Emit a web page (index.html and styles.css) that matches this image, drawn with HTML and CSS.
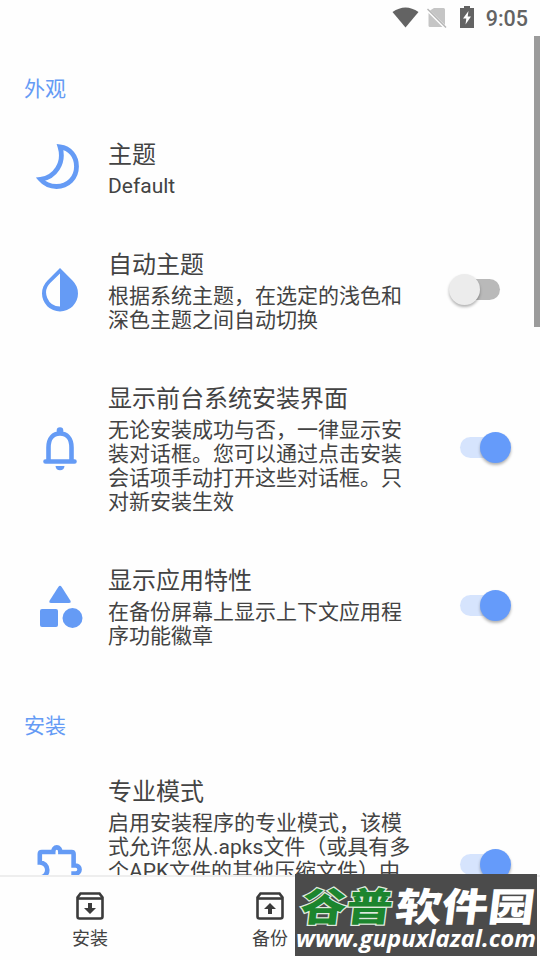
FILE: index.html
```html
<!DOCTYPE html>
<html lang="zh-CN">
<head>
<meta charset="utf-8">
<title>设置</title>
<link rel="stylesheet" href="styles.css">
</head>
<body>
<div class="screen">
  <header class="status">
    <svg width="27" height="22" viewBox="0 0 27 22"><path d="M.5 5Q13.500-4 26.500 5L13.500 20.500z" fill="#636363"/></svg>
    <svg class="sim" width="20" height="22" viewBox="0 0 20 22"><path d="M7 1h9.500q1.500 0 1.500 1.500V18L3 3.500zM1.500 6L15.500 20H3q-1.500 0-1.500-1.500z" fill="#c5c5c5"/><path d="M.5 2L19 20.500" stroke="#b5b5b5" stroke-width="1.500"/></svg>
    <svg class="battery" width="14" height="22" viewBox="0 0 14 22"><path d="M4 0h6v2h4v20H0V2h4z" fill="#636363"/><path d="M8.500 5L3 12.500h3.300L5.500 18.500 11 10.500H7.700z" fill="#fff"/></svg>
    <span class="clock">9:05</span>
  </header>
  <main class="settings">
    <h2>外观</h2>
    <section class="row">
      <svg class="icon" viewBox="0 0 48 48"><path d="M24 3.800C34 5 40.500 13 40.500 23.500 40.500 35 32 43.500 20.500 43.500 14 43.500 8.500 41 4.500 36.300 19 34.500 29 20 24 3.800z" fill="none" stroke="#659bf5" stroke-width="4.800"/></svg>
      <div class="copy"><h3>主题</h3><p class="latin">Default</p></div>
    </section>
    <section class="row">
      <svg class="icon" viewBox="0 0 48 48"><path d="M24 3L11.300 15.700a18 18 0 1 0 25.400 0zM24 41.500A13.800 13.800 0 0 1 14.200 18L24 8.500z" fill="#659bf5"/></svg>
      <div class="copy"><h3>自动主题</h3><p>根据系统主题，在选定的浅色和<br>深色主题之间自动切换</p></div>
      <i class="switch off"></i>
    </section>
    <section class="row">
      <svg class="icon low" viewBox="0 0 48 48"><path d="M12.500 36V22.500C12.500 13 17.500 8.500 24 8.500s11.500 4.500 11.500 14V36M9.500 36.500h29" fill="none" stroke="#659bf5" stroke-width="4.600" stroke-linecap="round"/><circle cx="24" cy="5.500" r="3.300" fill="#659bf5"/><path d="M19.500 41h9q-.5 4.300-4.500 4.300T19.500 41z" fill="#659bf5"/></svg>
      <div class="copy"><h3>显示前台系统安装界面</h3><p>无论安装成功与否，一律显示安<br>装对话框。您可以通过点击安装<br>会话项手动打开这些对话框。只<br>对新安装生效</p></div>
      <i class="switch"></i>
    </section>
    <section class="row">
      <svg class="icon low" viewBox="0 0 48 48"><g fill="#659bf5"><path d="M22.300 4q1.700-2.500 3.400 0l8.600 13.500q1.200 2.500-1.300 2.500H15q-2.500 0-1.300-2.500z"/><rect x="4" y="26" width="18" height="18" rx="2"/><circle cx="36.500" cy="35" r="10"/></g></svg>
      <div class="copy"><h3>显示应用特性</h3><p>在备份屏幕上显示上下文应用程<br>序功能徽章</p></div>
      <i class="switch"></i>
    </section>
    <h2>安装</h2>
    <section class="row tall">
      <svg class="icon low" viewBox="0 0 48 48"><path d="M3.800 20.500V12q0-2 2-2h11.400a3.600 4.600 0 0 1 7.200 0h11.200q2 0 2 2v11.500h2a3.700 3.700 0 0 1 0 8h-2v14H3.800V35.500a7.500 7.500 0 0 0 0-15z" fill="none" stroke="#659bf5" stroke-width="4.600"/></svg>
      <div class="copy"><h3>专业模式</h3><p>启用安装程序的专业模式，该模<br>式允许您从.apks文件（或具有多<br>个APK文件的其他压缩文件）中</p></div>
      <i class="switch"></i>
    </section>
  </main>
  <nav class="tabs">
    <div class="tab">
      <svg width="28" height="28" viewBox="0 0 28 28"><path d="M4.500 1.500h19l3 4v19q0 2-2 2h-21q-2 0-2-2v-19z" fill="none" stroke="#3b3b3b" stroke-width="2.600"/><path d="M2 6.500h24" stroke="#3b3b3b" stroke-width="2.600"/><path d="M12 11h4v5h4l-6 6-6-6h4z" fill="#3b3b3b"/></svg>
      <span>安装</span>
    </div>
    <div class="tab">
      <svg width="28" height="28" viewBox="0 0 28 28"><path d="M4.500 1.500h19l3 4v19q0 2-2 2h-21q-2 0-2-2v-19z" fill="none" stroke="#3b3b3b" stroke-width="2.600"/><path d="M2 6.500h24" stroke="#3b3b3b" stroke-width="2.600"/><path d="M12 22h4v-5h4l-6-6-6 6h4z" fill="#3b3b3b"/></svg>
      <span>备份</span>
    </div>
    <div class="tab"></div>
  </nav>
  <div class="scrollbar"></div>
  <aside class="mark">
    <svg width="242" height="82" viewBox="0 0 242 82">
      <g class="brand" transform="translate(4 47) skewX(-7)">
        <text class="green" x="0" y="0" textLength="92" lengthAdjust="spacingAndGlyphs">谷普</text>
        <text class="white" x="95" y="0" textLength="139" lengthAdjust="spacingAndGlyphs">软件园</text>
      </g>
      <text class="url" x="1" y="73" textLength="240" lengthAdjust="spacingAndGlyphs">www.gupuxlazal.com</text>
    </svg>
  </aside>
</div>
</body>
</html>
```
FILE: styles.css
```css
* { box-sizing: border-box; }
body { margin: 0; background: #fefefe; }
.screen {
  position: relative;
  display: flex;
  flex-direction: column;
  width: 540px;
  height: 960px;
  overflow: hidden;
  color: #434343;
  background: #fefefe;
  font-family: Roboto, "Noto Sans CJK SC", sans-serif;
}
.status {
  display: flex;
  flex: none;
  height: 36px;
  padding: 7px 12px 0 0;
  justify-content: flex-end;
  align-items: flex-start;
  color: #636363;
}
.sim { margin-left: 8px; }
.battery { margin: -1px 12px 0 13px; }
.clock { font-size: 21.5px; line-height: 24px; font-weight: 500; }
.settings { flex: 1; min-height: 0; overflow: hidden; }
h2, h3, p { margin: 0; font-weight: 400; }
h2 {
  height: 28px;
  margin: 39px 0 38px 24px;
  font-size: 21px;
  line-height: 28px;
  color: #659bf5;
}
.row + h2 { margin-top: 63px; }
.row {
  display: flex;
  align-items: center;
  padding-left: 36px;
}
.row + .row { margin-top: 52px; }
.icon { flex: none; width: 48px; height: 48px; margin: -6px 24px 0 0; }
.icon.low { margin-top: -2px; }
.copy { width: 310px; }
h3 { font-size: 24px; line-height: 28px; margin-bottom: 5px; white-space: nowrap; }
p { font-size: 21px; line-height: 24px; padding-bottom: 1px; white-space: nowrap; }
.tall { height: 178px; }
.tall .copy { align-self: flex-start; }
.switch {
  display: flex;
  width: 40px;
  height: 21px;
  margin: -5px 0 0 42px;
  border-radius: 11px;
  background: #d6e4fd;
  align-items: center;
  justify-content: flex-end;
}
.switch::after {
  content: "";
  flex: none;
  width: 31px;
  height: 31px;
  margin-right: -11px;
  border-radius: 50%;
  background: #659bfa;
  box-shadow: 0 2px 3px rgba(0, 0, 0, .3);
}
.switch.off { background: #b9b9b9; justify-content: flex-start; }
.switch.off::after { margin: 0 0 0 -11px; background: #ececec; }
.tabs {
  display: flex;
  flex: none;
  height: 85px;
  border-top: 2px solid #eee;
}
.tab {
  flex: 1;
  display: flex;
  flex-direction: column;
  align-items: center;
  padding-top: 15px;
  font-size: 18px;
  line-height: 24px;
}
.tab span { margin-top: 7px; }
.scrollbar {
  position: absolute;
  top: 36px;
  right: 0;
  width: 6px;
  height: 291px;
  background: #9b9b9b;
}
.mark {
  position: absolute;
  left: 295px;
  top: 874px;
  width: 242px;
  height: 82px;
  background: #4b4b4b;
}
.mark svg { display: block; }
.brand text { font: 900 39px "Noto Sans CJK SC", sans-serif; }
.green { fill: #1c852e; stroke: #dfeadf; stroke-width: 2.4px; paint-order: stroke; }
.white { fill: #fff; }
.url { fill: #fff; font: italic 700 24px "Open Sans", sans-serif; }
```
